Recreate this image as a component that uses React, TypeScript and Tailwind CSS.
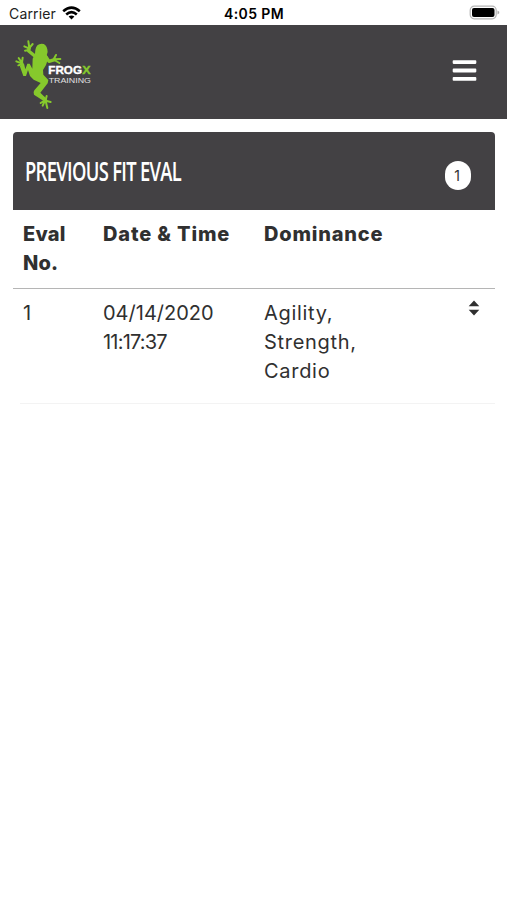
import { FaBars } from 'react-icons/fa';

const evals = [
  { id: 1, date: '04/14/2020', time: '11:17:37', dominance: ['Agility,', 'Strength,', 'Cardio'] },
];

function StatusBar() {
  return (
    <div className="grid h-[25px] grid-cols-3 items-center pr-[7px] pl-[9px] text-black">
      <div className="flex items-center gap-[6px] pt-[2px]">
        <span className="text-[14px] leading-none tracking-[0.15px] text-[#222]">Carrier</span>
        <svg className="mt-[-2px] h-[14px] w-[19px]" viewBox="0 0 19 14">
          <g fill="none" stroke="#000" strokeWidth="2.6">
            <path d="M1.2 5.2Q9.5 -2 17.8 5.2" />
            <path d="M4.2 8.4Q9.5 3.8 14.8 8.4" />
          </g>
          <path d="M6.6 10.6Q9.5 8.2 12.4 10.6L9.5 13.6Z" />
        </svg>
      </div>
      <div className="pt-[2px] pr-[1px] text-center text-[14px] leading-none font-semibold tracking-[0.4px]">4:05 PM</div>
      <svg className="ml-auto h-[15px] w-[31px]" viewBox="0 0 31 15">
        <rect x="1.2" y="1.2" width="26" height="12.6" rx="4" fill="#fff" stroke="#b5b5b5" strokeWidth="1.2" />
        <rect x="3" y="3" width="22.5" height="9" rx="2" fill="#000" />
        <path d="M28.5 5.5v4l1.7-1.2V6.7z" fill="#aaa" />
      </svg>
    </div>
  );
}

function Logo() {
  return (
    <svg className="h-[90px] w-[100px] font-['Liberation_Sans',sans-serif]" viewBox="0 0 300 270">
      <g fill="#86c92c">
        <path d="M91 60Q94 41 110 41Q124 41 127 58Q130 67 125 76L130 84L123 105L114 120L115 134L130 150L128 160L106 188L122 204L116 213L87 194Q83 188 88 181L107 159L86 149L75 138L69 120L63 138H55L44 107L57 101L61 118L67 101H74L82 116L83 86L90 72Z" />
      </g>
      <g fill="none" stroke="#86c92c" strokeLinecap="round" strokeLinejoin="round">
        <path d="M91 79L71 63L73 53" strokeWidth="10" />
        <path d="M73 56L58 49M73 54L70 34M73 54L83 42M71 60L60 62" strokeWidth="6" />
        <path d="M122 79L132 94L149 89" strokeWidth="10" />
        <path d="M146 88L153 75M149 88L166 87M148 90L163 99" strokeWidth="6" />
        <path d="M53 108L50 98" strokeWidth="9" />
        <path d="M52 101L34 94M51 99L41 84M51 98L53 83M52 102L40 106" strokeWidth="6" />
        <path d="M116 205L123 213" strokeWidth="10" />
        <path d="M122 210L125 198M122 212L137 216M122 213L127 234M120 212L113 227M120 211L107 219" strokeWidth="6" />
      </g>
      <text x="130" y="131" fontSize="31" fontWeight="700" fill="#fff" stroke="#fff" textLength="101" lengthAdjust="spacingAndGlyphs">
        FROG
      </text>
      <text x="232" y="131" fontSize="31" fontWeight="700" fill="#86c92c" stroke="#86c92c" textLength="25" lengthAdjust="spacingAndGlyphs">
        X
      </text>
      <text x="131" y="158" fontSize="23" fill="#e0e0e1" textLength="127" lengthAdjust="spacingAndGlyphs">
        TRAINING
      </text>
    </svg>
  );
}

function SortIcon() {
  return (
    <svg className="mt-[1px] h-[16px] w-[12px]" viewBox="0 0 12 16" fill="#303030">
      <path d="M6 .5L11.3 6.2H.7zM6 15.5L.7 9.8h10.6z" />
    </svg>
  );
}

export default function App() {
  return (
    <div className="min-h-[900px] w-full bg-white font-['Inter','Liberation_Sans',sans-serif] text-[#303030]">
      <StatusBar />

      <header className="flex h-[94px] items-start justify-between bg-[#434144] pt-[5px] pr-[30px] pl-[5px]">
        <Logo />
        <button type="button" aria-label="Menu" className="mt-[27px] text-white">
          <FaBars className="h-[27px] w-[25px]" />
        </button>
      </header>

      <main className="pt-[13px] pr-3 pl-[13px]">
        <div className="flex h-[78px] items-center justify-between rounded-t bg-[#434144] pr-6 pl-3">
          <h1 className="mb-[2px] w-[157px] origin-left scale-x-[0.68] font-['Open_Sans',sans-serif] text-[27px] leading-none font-semibold tracking-[-1px] whitespace-nowrap text-white">
            PREVIOUS FIT EVAL
          </h1>
          <span className="mt-[8px] flex h-[29px] w-[26px] items-center justify-center rounded-full bg-white pr-[2px] text-[14px]">
            1
          </span>
        </div>

        <div className="grid h-[79px] grid-cols-[80px_161px_1fr] border-b border-[#b5b5b5] pt-[10px] pl-[10px] text-[20px] leading-[29px] font-extrabold">
          <div className="tracking-[0.2px]">Eval<br />No.</div>
          <div className="tracking-[0.85px]">Date &amp; Time</div>
          <div className="tracking-[0.8px]">Dominance</div>
        </div>

        {evals.map((row) => (
          <div key={row.id}>
            <div className="grid h-[114px] grid-cols-[80px_161px_1fr_auto] pt-[10px] pr-[15px] pl-[10px] text-[20px] leading-[29px]">
              <div>{row.id}</div>
              <div>
                <div>{row.date}</div>
                <div className="tracking-[-0.8px]">{row.time}</div>
              </div>
              <div className="tracking-[0.7px]">
                {row.dominance.map((name) => (
                  <div key={name}>{name}</div>
                ))}
              </div>
              <SortIcon />
            </div>
            <div className="ml-[7px] h-px bg-[#f3f3f3]" />
          </div>
        ))}
      </main>
    </div>
  );
}
